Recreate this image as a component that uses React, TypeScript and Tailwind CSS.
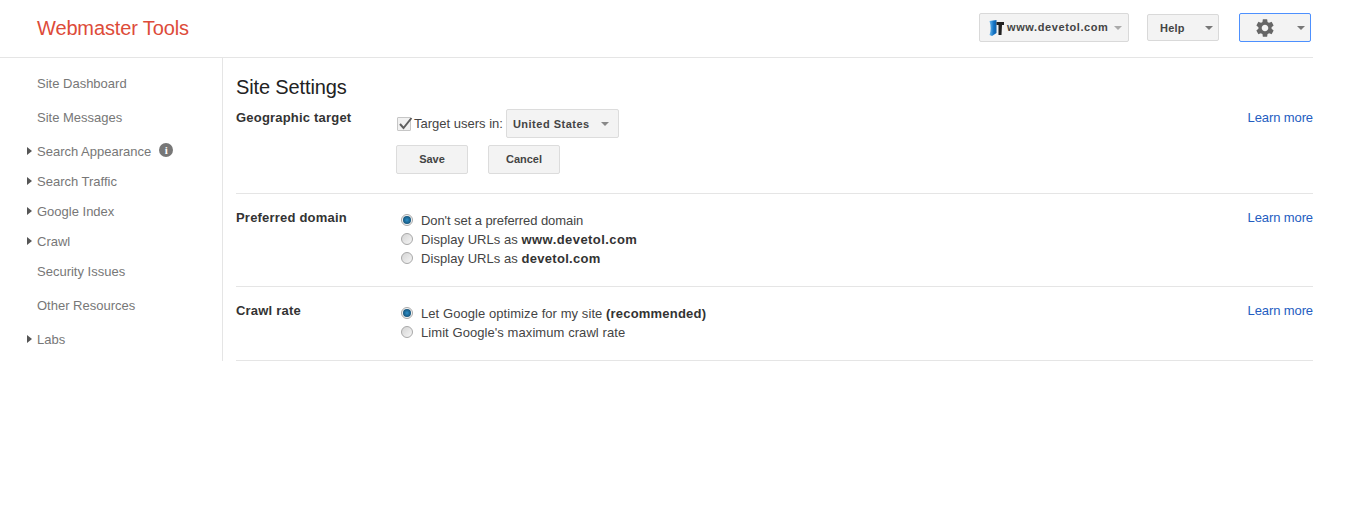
import { MdSettings } from 'react-icons/md';

function Caret({ color = 'border-t-[#777]' }: { color?: string }) {
    return <span className={`w-0 h-0 border-x-[4px] border-x-transparent border-t-[4px] ${color}`} />;
}

function NavItem({ label, arrow, gap, children }: { label: string; arrow?: boolean; gap?: boolean; children?: React.ReactNode }) {
    return (
        <div className={`relative flex items-center h-[30px] pl-[37px] text-[#777] ${gap ? 'mt-[4px]' : ''}`}>
            {arrow && (
                <span className="absolute left-[27px] top-[11px] w-0 h-0 border-y-[4px] border-y-transparent border-l-[5px] border-l-[#555]" />
            )}
            <span>{label}</span>
            {children}
        </div>
    );
}

function Radio({ checked, children, className }: { checked?: boolean; children: React.ReactNode; className?: string }) {
    return (
        <div className={`flex items-center h-[19px] ${className ?? ''}`}>
            <span className={`ml-[5px] mb-[2px] flex items-center justify-center w-[12px] h-[12px] rounded-full border border-[#a8a8a8] ${checked ? 'bg-[#f4f4f4]' : 'bg-gradient-to-br from-[#d4d4d4] to-[#f6f6f6]'}`}>
                {checked && <span className="w-[8px] h-[8px] rounded-full bg-radial from-[#2d8fc8] to-[#0d3f5f]" />}
            </span>
            <span className="ml-[8px]">{children}</span>
        </div>
    );
}

function Section({ title, children }: { title: string; children: React.ReactNode }) {
    return (
        <div className="flex border-b border-[#e5e5e5]">
            <div className="w-[160px] font-bold text-[#333] tracking-[0.2px]">{title}</div>
            <div className="flex-1">{children}</div>
            <a className="text-[#245dc1] tracking-[-0.1px]">Learn more</a>
        </div>
    );
}

export default function App() {
    return (
        <div className="w-[1351px] h-[516px] bg-white overflow-hidden text-[13px] leading-[17px] text-[#444] font-['Liberation_Sans',Arial,sans-serif]">
            <header className="w-[1313px] h-[58px] border-b border-[#e5e5e5] flex items-center pl-[37px] pb-[2px]">
                <div className="text-[20px] leading-[24px] text-[#dd4b39] tracking-[-0.13px] flex-1">Webmaster Tools</div>
                <button className="flex items-center w-[150px] h-[29px] border border-[#d9d9d9] rounded-[2px] bg-[#f3f3f3] font-bold text-[11px] text-[#444] pl-[9px]">
                    <svg width="15" height="16" viewBox="0 0 15 16" className="mr-[3px]">
                        <defs>
                            <linearGradient id="logoBlue" x1="0" x2="1" y1="0" y2="0">
                                <stop offset="0" stopColor="#6ab8ee" />
                                <stop offset="0.6" stopColor="#1273c4" />
                                <stop offset="1" stopColor="#0d5fa8" />
                            </linearGradient>
                        </defs>
                        <path d="M0.500 1 L7.500 0 L7.500 13 L3 16 L0.500 15 C2 11 2 6 0.500 1 Z" fill="url(#logoBlue)" />
                        <path d="M7.500 2 H15 V5 H13 L12.500 15 H9.500 V5 H7.500 Z" fill="#222" />
                    </svg>
                    <span className="tracking-[0.6px]">www.devetol.com</span>
                    <span className="ml-[5px] flex"><Caret color="border-t-[#aaa]" /></span>
                </button>
                <button className="flex items-center justify-between w-[72px] h-[27px] ml-[18px] border border-[#d9d9d9] rounded-[2px] bg-[#f3f3f3] font-bold text-[11px] text-[#444] pl-[12px] pr-[5px]">
                    <span className="pt-[1px] tracking-[0.2px]">Help</span>
                    <Caret />
                </button>
                <button className="flex items-center justify-between w-[72px] h-[29px] ml-[20px] mr-[2px] border border-[#4d90fe] rounded-[2px] bg-[#f3f3f3] pl-[14px] pr-[5px]">
                    <MdSettings className="text-[22px] text-[#666]" />
                    <Caret />
                </button>
            </header>
            <div className="flex w-[1313px]">
                <nav className="w-[223px] h-[303px] border-r border-[#e5e5e5] pt-[10px] shrink-0">
                    <NavItem label="Site Dashboard" />
                    <NavItem label="Site Messages" gap />
                    <NavItem label="Search Appearance" arrow gap>
                        <span className="ml-[8px] mb-[2px] flex items-center justify-center w-[14px] h-[14px] rounded-full bg-[#777] text-white text-[11px] font-bold font-['Liberation_Serif',serif]">i</span>
                    </NavItem>
                    <NavItem label="Search Traffic" arrow />
                    <NavItem label="Google Index" arrow />
                    <NavItem label="Crawl" arrow />
                    <NavItem label="Security Issues" />
                    <NavItem label="Other Resources" gap />
                    <NavItem label="Labs" arrow gap />
                </nav>
                <main className="flex-1 ml-[13px]">
                    <h1 className="text-[20px] leading-[24px] text-[#222] tracking-[-0.13px] mt-[17px] mb-[10px]">Site Settings</h1>
                    <Section title="Geographic target">
                        <div className="flex items-center h-[29px]">
                            <span className="relative ml-[1px] w-[14px] h-[14px] border border-[#c6c6c6] bg-[#f1f1f1] rounded-[1px]">
                                <svg width="15" height="15" viewBox="0 0 15 15" className="absolute left-0 -top-[2px]"><path d="M2 8 L5.500 12 L13.500 2" fill="none" stroke="#5f5f5f" strokeWidth="2" /></svg>
                            </span>
                            <span className="ml-[3px]">Target users in:</span>
                            <span className="ml-[3px] flex items-center justify-between w-[113px] h-[29px] border border-[#dcdcdc] rounded-[2px] bg-[#f3f3f3] font-bold text-[11px] tracking-[0.5px] pl-[6px] pr-[9px]">
                                <span className="pt-[1px]">United States</span>
                                <Caret color="border-t-[#888]" />
                            </span>
                        </div>
                        <div className="flex gap-[20px] mt-[7px] mb-[19px]">
                            <button className="w-[72px] h-[29px] border border-[#dcdcdc] rounded-[2px] bg-[#f3f3f3] font-bold text-[11px] text-[#444]">Save</button>
                            <button className="w-[72px] h-[29px] border border-[#dcdcdc] rounded-[2px] bg-[#f3f3f3] font-bold text-[11px] text-[#444]">Cancel</button>
                        </div>
                    </Section>
                    <div className="pt-[15px]">
                        <Section title="Preferred domain">
                            <div className="pt-[2px] pb-[18px] tracking-[0.05px]">
                                <Radio checked className="tracking-[-0.08px]">Don't set a preferred domain</Radio>
                                <Radio>Display URLs as <b className="text-[#333] tracking-[0.43px]">www.devetol.com</b></Radio>
                                <Radio>Display URLs as <b className="text-[#333] tracking-[0.3px]">devetol.com</b></Radio>
                            </div>
                        </Section>
                    </div>
                    <div className="pt-[15px]">
                        <Section title="Crawl rate">
                            <div className="pt-[2px] pb-[18px] tracking-[0.07px]">
                                <Radio checked>Let Google optimize for my site <b className="text-[#333] tracking-[0.2px]">(recommended)</b></Radio>
                                <Radio>Limit Google's maximum crawl rate</Radio>
                            </div>
                        </Section>
                    </div>
                </main>
            </div>
        </div>
    );
}
